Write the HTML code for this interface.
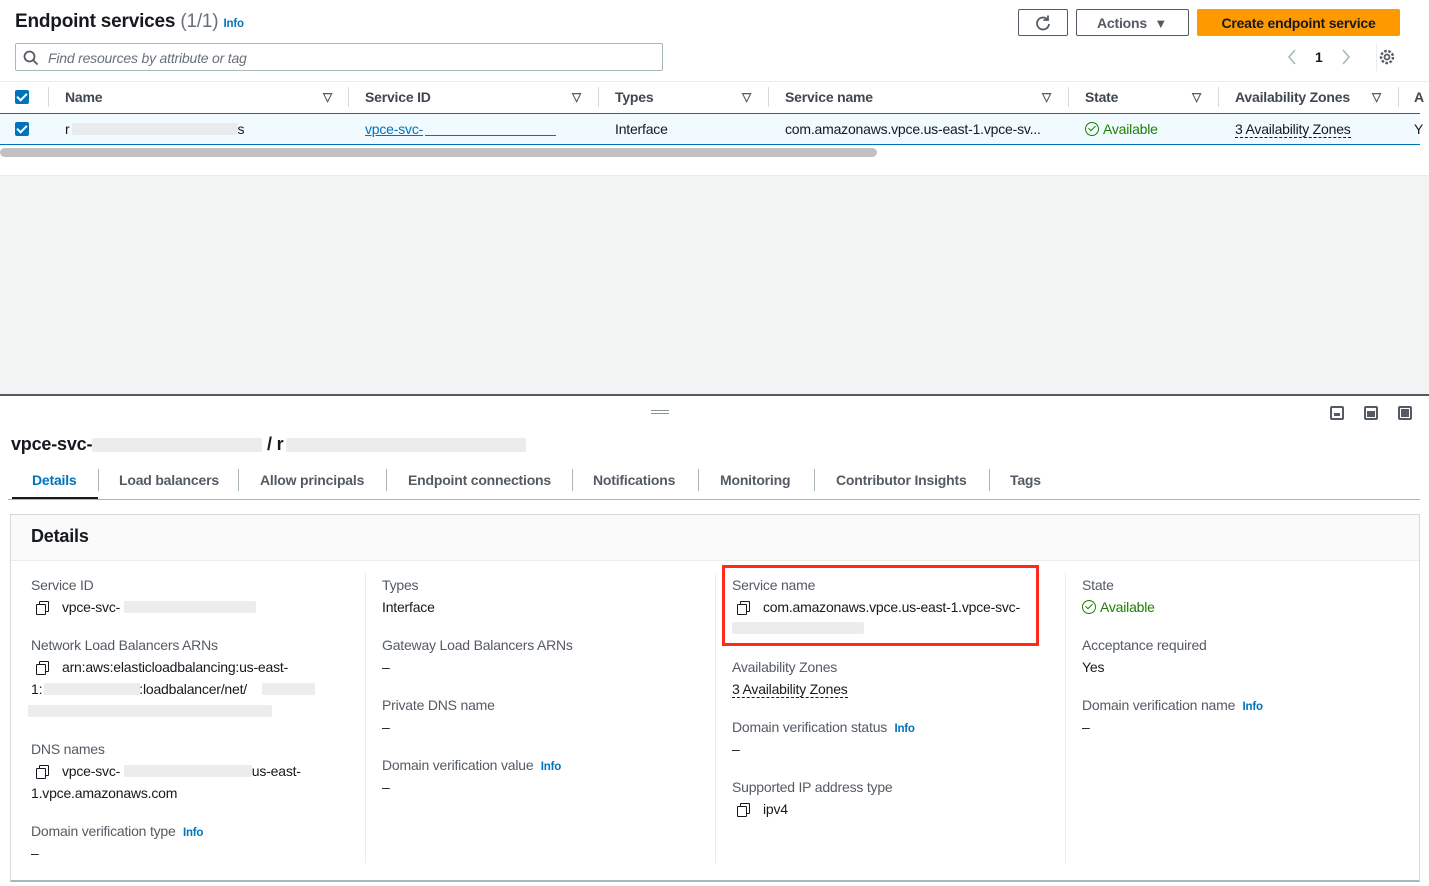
<!DOCTYPE html>
<html><head><meta charset="utf-8"><style>
*{box-sizing:border-box;margin:0;padding:0}
body{width:1429px;height:886px;overflow:hidden;background:#fff;font-family:"Liberation Sans",sans-serif;font-size:14px;color:#16191f;position:relative;letter-spacing:-0.2px}
.a{position:absolute;white-space:nowrap}
.b{font-weight:bold}
.info{color:#0073bb;font-weight:bold;font-size:11.5px}
.red{background:#ececec;height:12px;position:absolute;border-radius:2px}
.lbl{color:#545b64}
.cp{display:inline-block;width:12px;height:12px;position:relative;vertical-align:-1px;margin-right:14px}
.cp:before{content:"";position:absolute;left:3px;top:0;width:8px;height:9px;border:1.6px solid #16191f;border-radius:1px}
.cp:after{content:"";position:absolute;left:0;top:3px;width:8px;height:9px;border:1.6px solid #16191f;background:#fff;border-radius:1px}
.cb{position:absolute;width:14px;height:14px;background:#0073bb;border-radius:2px}
.cb:after{content:"";position:absolute;left:4px;top:1px;width:4px;height:8px;border:solid #fff;border-width:0 2px 2px 0;transform:rotate(45deg)}
.sep{position:absolute;width:1px;background:#d5dbdb}
.tri{position:absolute;font-size:12px;color:#545b64;font-weight:bold}
.hd{color:#414750}
.tab{position:absolute;top:472px;font-weight:bold;color:#545b64;font-size:14px}
.tsep{position:absolute;top:469px;height:22px;width:1px;background:#aab7b8}
.green{color:#1d8102}
.ok{display:inline-block;width:14px;height:14px;border:1.6px solid #1d8102;border-radius:50%;vertical-align:-2px;margin-right:4px;position:relative}
.ok:after{content:"";position:absolute;left:3.5px;top:1px;width:3px;height:6px;border:solid #1d8102;border-width:0 1.6px 1.6px 0;transform:rotate(45deg)}
.dash{border-bottom:1px dashed #16191f}
</style></head><body>
<div class="a" style="left:0;top:0;width:1429px;height:175px;background:#fff"></div>
<div class="a" style="left:0;top:175px;width:1429px;height:220px;background:#f2f3f3;border-top:1px solid #e9ebed"></div>
<div class="a" style="left:0;top:394px;width:1429px;height:2px;background:#545b64"></div>

<div class="a b" style="left:15px;top:11px;font-size:19px">Endpoint services <span style="font-weight:normal;color:#687078">(1/1)</span> <span class="info">Info</span></div>
<div class="a" style="left:15px;top:43px;width:648px;height:28px;border:1px solid #aab7b8;border-radius:2px"></div>
<svg class="a" style="left:23px;top:50px" width="16" height="16"><circle cx="6.5" cy="6.5" r="5" fill="none" stroke="#545b64" stroke-width="1.8"/><path d="M10 10l4.5 4.5" stroke="#545b64" stroke-width="1.8"/></svg>
<div class="a" style="left:48px;top:50px;font-style:italic;color:#687078">Find resources by attribute or tag</div>

<div class="a" style="left:1018px;top:9px;width:50px;height:27px;border:1px solid #545b64;border-radius:2px"></div>
<svg class="a" style="left:1034px;top:14px" width="18" height="18"><path d="M13.5 5.5A6 6 0 1 0 15 10" fill="none" stroke="#545b64" stroke-width="1.8"/><path d="M14 1.5v4.5h-4.5" fill="none" stroke="#545b64" stroke-width="1.8"/></svg>
<div class="a b" style="left:1076px;top:9px;width:113px;height:27px;border:1px solid #545b64;border-radius:2px;color:#545b64;padding:5px 0 0 20px">Actions &nbsp;<span style="font-size:13px">▼</span></div>
<div class="a b" style="left:1197px;top:9px;width:203px;height:27px;background:#ff9900;border-radius:2px;text-align:center;padding-top:6px">Create endpoint service</div>
<svg class="a" style="left:1285px;top:49px" width="80" height="16"><path d="M10 1L4 8l6 7" fill="none" stroke="#aab7b8" stroke-width="1.6"/><path d="M58 1l6 7-6 7" fill="none" stroke="#aab7b8" stroke-width="1.6"/></svg>
<div class="a b" style="left:1315px;top:49px">1</div>
<div class="sep" style="left:1376px;top:43px;height:28px;background:#eaeded"></div>
<svg class="a" style="left:1378px;top:48px" width="18" height="18"><circle cx="9" cy="9" r="2.5" fill="none" stroke="#545b64" stroke-width="1.8"/><circle cx="9" cy="9" r="6" fill="none" stroke="#545b64" stroke-width="2.4" stroke-dasharray="2.6 1.6"/></svg>

<div class="a" style="left:0;top:81px;width:1429px;height:1px;background:#eaeded"></div>
<div class="cb" style="left:15px;top:90px"></div>
<div class="sep" style="left:48px;top:87px;height:20px"></div>
<div class="a b hd" style="left:65px;top:89px">Name</div><div class="tri" style="left:323px;top:90px">▽</div>
<div class="sep" style="left:348px;top:87px;height:20px"></div>
<div class="a b hd" style="left:365px;top:89px">Service ID</div><div class="tri" style="left:572px;top:90px">▽</div>
<div class="sep" style="left:598px;top:87px;height:20px"></div>
<div class="a b hd" style="left:615px;top:89px">Types</div><div class="tri" style="left:742px;top:90px">▽</div>
<div class="sep" style="left:768px;top:87px;height:20px"></div>
<div class="a b hd" style="left:785px;top:89px">Service name</div><div class="tri" style="left:1042px;top:90px">▽</div>
<div class="sep" style="left:1068px;top:87px;height:20px"></div>
<div class="a b hd" style="left:1085px;top:89px">State</div><div class="tri" style="left:1192px;top:90px">▽</div>
<div class="sep" style="left:1218px;top:87px;height:20px"></div>
<div class="a b hd" style="left:1235px;top:89px">Availability Zones</div><div class="tri" style="left:1372px;top:90px">▽</div>
<div class="sep" style="left:1398px;top:87px;height:20px"></div>
<div class="a b hd" style="left:1414px;top:89px">A</div>

<div class="a" style="left:0;top:113px;width:1420px;height:32px;background:#f1faff;border-top:1px solid #0073bb;border-bottom:1px solid #0073bb"></div>
<div class="cb" style="left:15px;top:122px"></div>
<div class="a" style="left:65px;top:121px">r<span style="display:inline-block;width:168px"></span>s</div>
<div class="red" style="left:72px;top:123px;width:166px;background:#e9ecee"></div>
<div class="a" style="left:365px;top:121px;color:#0073bb;text-decoration:underline">vpce-svc-<span style="display:inline-block;width:128px"></span></div>
<div class="a" style="left:425px;top:135px;width:131px;height:1px;background:#0073bb"></div>
<div class="a" style="left:615px;top:121px">Interface</div>
<div class="a" style="left:785px;top:121px">com.amazonaws.vpce.us-east-1.vpce-sv...</div>
<div class="a green" style="left:1085px;top:121px"><span class="ok"></span>Available</div>
<div class="a" style="left:1235px;top:121px"><span class="dash">3 Availability Zones</span></div>
<div class="a" style="left:1414px;top:121px">Y</div>
<div class="a" style="left:0;top:148px;width:877px;height:9px;background:#c1c1c1;border-radius:5px"></div>

<div class="a" style="left:651px;top:410px;width:18px;border-top:1px solid #879596;border-bottom:1px solid #879596;height:4px"></div>
<div class="a" style="left:1330px;top:406px;width:14px;height:14px;border:2px solid #545b64;border-radius:2px"><div style="position:absolute;left:2px;top:5px;width:6px;height:3px;background:#545b64"></div></div>
<div class="a" style="left:1364px;top:406px;width:14px;height:14px;border:2px solid #545b64;border-radius:2px"><div style="position:absolute;left:1px;top:3px;width:8px;height:6px;background:#545b64"></div></div>
<div class="a" style="left:1398px;top:406px;width:14px;height:14px;border:2px solid #545b64;border-radius:2px"><div style="position:absolute;left:1px;top:1px;width:8px;height:8px;background:#545b64"></div></div>

<div class="a b" style="left:11px;top:434px;font-size:18px">vpce-svc-<span style="display:inline-block;width:170px"></span> / r<span style="display:inline-block;width:236px"></span></div>
<div class="red" style="left:92px;top:438px;width:170px;height:14px"></div>
<div class="red" style="left:286px;top:438px;width:240px;height:14px"></div>

<div class="tab" style="left:32px;color:#0073bb">Details</div>
<div class="a" style="left:12px;top:497px;width:86px;height:3px;background:#16191f"></div>
<div class="tsep" style="left:98px"></div><div class="tab" style="left:119px">Load balancers</div>
<div class="tsep" style="left:238px"></div><div class="tab" style="left:260px">Allow principals</div>
<div class="tsep" style="left:386px"></div><div class="tab" style="left:408px">Endpoint connections</div>
<div class="tsep" style="left:572px"></div><div class="tab" style="left:593px">Notifications</div>
<div class="tsep" style="left:698px"></div><div class="tab" style="left:720px">Monitoring</div>
<div class="tsep" style="left:814px"></div><div class="tab" style="left:836px">Contributor Insights</div>
<div class="tsep" style="left:989px"></div><div class="tab" style="left:1010px">Tags</div>
<div class="a" style="left:8px;top:499px;width:1412px;height:1px;background:#aab7b8"></div>

<div class="a" style="left:10px;top:514px;width:1410px;height:368px;border:1px solid #d5dbdb;border-bottom:2px solid #aab7b8"></div>
<div class="a" style="left:11px;top:515px;width:1408px;height:46px;background:#fafafa;border-bottom:1px solid #eaeded"></div>
<div class="a b" style="left:31px;top:526px;font-size:18px">Details</div>
<div class="sep" style="left:365px;top:573px;height:290px;background:#eaeded"></div>
<div class="sep" style="left:715px;top:573px;height:290px;background:#eaeded"></div>
<div class="sep" style="left:1065px;top:573px;height:290px;background:#eaeded"></div>

<div class="a lbl" style="left:31px;top:577px">Service ID</div>
<div class="a" style="left:36px;top:599px"><span class="cp"></span>vpce-svc-</div>
<div class="red" style="left:124px;top:601px;width:132px"></div>
<div class="a lbl" style="left:31px;top:637px">Network Load Balancers ARNs</div>
<div class="a" style="left:36px;top:659px"><span class="cp"></span>arn:aws:elasticloadbalancing:us-east-</div>
<div class="a" style="left:31px;top:681px">1:<span style="display:inline-block;width:97px"></span>:loadbalancer/net/</div>
<div class="red" style="left:44px;top:683px;width:96px"></div><div class="red" style="left:262px;top:683px;width:53px"></div>
<div class="red" style="left:28px;top:705px;width:244px"></div>
<div class="a lbl" style="left:31px;top:741px">DNS names</div>
<div class="a" style="left:36px;top:763px"><span class="cp"></span>vpce-svc-<span style="display:inline-block;width:128px"></span>.us-east-</div>
<div class="red" style="left:124px;top:765px;width:128px"></div>
<div class="a" style="left:31px;top:785px">1.vpce.amazonaws.com</div>
<div class="a lbl" style="left:31px;top:823px">Domain verification type &nbsp;<span class="info">Info</span></div>
<div class="a" style="left:31px;top:845px">–</div>

<div class="a lbl" style="left:382px;top:577px">Types</div>
<div class="a" style="left:382px;top:599px">Interface</div>
<div class="a lbl" style="left:382px;top:637px">Gateway Load Balancers ARNs</div>
<div class="a" style="left:382px;top:659px">–</div>
<div class="a lbl" style="left:382px;top:697px">Private DNS name</div>
<div class="a" style="left:382px;top:719px">–</div>
<div class="a lbl" style="left:382px;top:757px">Domain verification value &nbsp;<span class="info">Info</span></div>
<div class="a" style="left:382px;top:779px">–</div>

<div class="a" style="left:722px;top:565px;width:317px;height:81px;border:3px solid #ff2a1a"></div>
<div class="a lbl" style="left:732px;top:577px">Service name</div>
<div class="a" style="left:737px;top:599px"><span class="cp"></span>com.amazonaws.vpce.us-east-1.vpce-svc-</div>
<div class="red" style="left:732px;top:622px;width:132px"></div>
<div class="a lbl" style="left:732px;top:659px">Availability Zones</div>
<div class="a" style="left:732px;top:681px"><span class="dash">3 Availability Zones</span></div>
<div class="a lbl" style="left:732px;top:719px">Domain verification status &nbsp;<span class="info">Info</span></div>
<div class="a" style="left:732px;top:741px">–</div>
<div class="a lbl" style="left:732px;top:779px">Supported IP address type</div>
<div class="a" style="left:737px;top:801px"><span class="cp"></span>ipv4</div>

<div class="a lbl" style="left:1082px;top:577px">State</div>
<div class="a green" style="left:1082px;top:599px"><span class="ok"></span>Available</div>
<div class="a lbl" style="left:1082px;top:637px">Acceptance required</div>
<div class="a" style="left:1082px;top:659px">Yes</div>
<div class="a lbl" style="left:1082px;top:697px">Domain verification name &nbsp;<span class="info">Info</span></div>
<div class="a" style="left:1082px;top:719px">–</div>
</body></html>
